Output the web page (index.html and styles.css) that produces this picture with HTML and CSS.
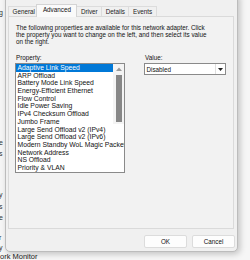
FILE: index.html
```html
<!DOCTYPE html>
<html>
<head>
<meta charset="utf-8">
<link rel="stylesheet" href="styles.css">
</head>
<body>
<div class="desk">
  <div class="back-col">
    <div class="frag f1">g</div>
    <div class="frag f2">e</div>
    <div class="frag f3">s</div>
    <div class="frag f4">y</div>
    <div class="frag f5">s</div>
    <div class="frag f6">e</div>
    <div class="frag f7">r</div>
    <div class="frag f8">y</div>
  </div>
  <div class="back-title">ork Monitor</div>
  <div class="win">
    <div class="tabs">
      <div class="tab">General</div>
      <div class="tab sel">Advanced</div>
      <div class="tab">Driver</div>
      <div class="tab">Details</div>
      <div class="tab">Events</div>
    </div>
    <div class="page">
      <p class="desc">The following properties are available for this network adapter. Click<br>the property you want to change on the left, and then select its value<br>on the right.</p>
      <div class="cols">
        <div class="col-prop">
          <div class="lbl">Property:</div>
          <div class="list">
            <div class="item sel">Adaptive Link Speed</div>
            <div class="item">ARP Offload</div>
            <div class="item">Battery Mode Link Speed</div>
            <div class="item">Energy-Efficient Ethernet</div>
            <div class="item">Flow Control</div>
            <div class="item">Idle Power Saving</div>
            <div class="item">IPv4 Checksum Offload</div>
            <div class="item">Jumbo Frame</div>
            <div class="item">Large Send Offload v2 (IPv4)</div>
            <div class="item">Large Send Offload v2 (IPv6)</div>
            <div class="item">Modern Standby WoL Magic Packet</div>
            <div class="item">Network Address</div>
            <div class="item">NS Offload</div>
            <div class="item">Priority &amp; VLAN</div>
            <div class="scroll">
              <svg class="up" width="6" height="4" viewBox="0 0 6 4"><polygon points="0,4 3,0.5 6,4" fill="#9a9a9a"/></svg>
              <div class="thumb"></div>
            </div>
          </div>
        </div>
        <div class="col-val">
          <div class="lbl">Value:</div>
          <div class="combo">
            <span class="combo-text">Disabled</span>
            <span class="drop"><svg width="5" height="3" viewBox="0 0 5 3"><polygon points="0,0 5,0 2.5,3" fill="#222"/></svg></span>
          </div>
        </div>
      </div>
    </div>
    <div class="buttons">
      <button class="btn">OK</button>
      <button class="btn">Cancel</button>
    </div>
  </div>
</div>
</body>
</html>
```

FILE: styles.css
```css
html, body {
  margin: 0;
  padding: 0;
}
body {
  width: 250px;
  height: 260px;
  overflow: hidden;
  background: #f6f6f6;
  font-family: "Liberation Sans", Arial, sans-serif;
  color: #111;
}
.desk {
  position: relative;
  width: 250px;
  height: 260px;
  overflow: hidden;
}
.back-col {
  position: absolute;
  left: 0;
  top: 0;
  width: 5px;
  height: 260px;
  font-size: 7px;
  color: #333;
}
.frag {
  position: absolute;
  left: -1px;
}
.f1 { top: 9px; }
.f2 { top: 139px; }
.f3 { top: 150px; }
.f4 { top: 191px; }
.f5 { top: 203px; }
.f6 { top: 214px; }
.f7 { top: 234px; }
.f8 { top: 244px; }
.back-title {
  position: absolute;
  left: 0;
  top: 253px;
  font-size: 7.5px;
  line-height: 7px;
  color: #1a1a1a;
  white-space: nowrap;
}
.win {
  position: absolute;
  left: 5px;
  top: -6px;
  width: 233px;
  height: 258px;
  box-sizing: border-box;
  background: #f0f0f0;
  border: 1px solid #bcbcbc;
  border-radius: 0 0 5px 5px;
  box-shadow: 2px 2px 6px rgba(0, 0, 0, 0.22);
  display: flex;
  flex-direction: column;
  padding-top: 9px;
}
.tabs {
  display: flex;
  align-items: flex-end;
  height: 13px;
  margin-left: 2px;
  font-size: 6.3px;
}
.tab {
  height: 11px;
  box-sizing: border-box;
  padding: 0 3.5px;
  line-height: 10px;
  background: #f0f0f0;
  border: 1px solid #dcdcdc;
  border-bottom: none;
  margin-right: -1px;
  color: #222;
}
.tab.sel {
  position: relative;
  z-index: 2;
  height: 13px;
  margin: 0 -1px 0 -2px;
  padding: 0 5.5px;
  line-height: 10px;
  background: #fafafa;
  border-color: #d4d4d4;
  color: #111;
}
.page {
  position: relative;
  z-index: 1;
  margin: -1px 3px 0 2px;
  height: 213px;
  box-sizing: border-box;
  background: #f2f2f2;
  border: 1px solid #dadada;
  padding: 6.5px 0 0 6px;
}
.desc {
  margin: 0 0 0 1px;
  font-size: 6.3px;
  line-height: 7px;
  white-space: nowrap;
}
.cols {
  display: flex;
  gap: 19px;
  margin-top: 9px;
}
.lbl {
  font-size: 6.3px;
  line-height: 7px;
  margin-left: 1px;
  margin-bottom: 2.5px;
}
.col-prop {
  width: 110px;
}
.list {
  position: relative;
  height: 110px;
  box-sizing: border-box;
  background: #fff;
  border: 1px solid #8a8a8a;
  overflow: hidden;
}
.item {
  height: 7.7px;
  line-height: 7.7px;
  font-size: 6.8px;
  padding-left: 1.5px;
  white-space: nowrap;
  color: #111;
}
.item.sel {
  background: #0078d7;
  color: #fff;
  margin-right: 11px;
}
.scroll {
  position: absolute;
  top: 0;
  right: 0;
  width: 11px;
  height: 60px;
  display: flex;
  flex-direction: column;
  align-items: center;
  background: #f4f4f4;
}
.up {
  margin-top: 3px;
}
.thumb {
  margin-top: 4px;
  width: 6px;
  height: 47px;
  background: #878787;
}
.col-val {
  width: 82px;
}
.combo {
  height: 12px;
  box-sizing: border-box;
  background: #fff;
  border: 1px solid #8a8a8a;
  display: flex;
  align-items: center;
  justify-content: space-between;
  margin-top: 1px;
}
.combo-text {
  font-size: 6.3px;
  padding-left: 1.5px;
}
.drop {
  width: 10px;
  height: 10px;
  box-sizing: border-box;
  border-left: 1px solid #dedede;
  display: flex;
  align-items: center;
  justify-content: center;
}
.buttons {
  display: flex;
  justify-content: flex-end;
  gap: 5px;
  margin-top: 6px;
  padding-right: 2px;
}
.btn {
  width: 43px;
  height: 13px;
  padding: 0;
  font-family: "Liberation Sans", Arial, sans-serif;
  font-size: 6.3px;
  color: #111;
  background: #fdfdfd;
  border: 1px solid #dcdcdc;
  border-radius: 2px;
}
```
